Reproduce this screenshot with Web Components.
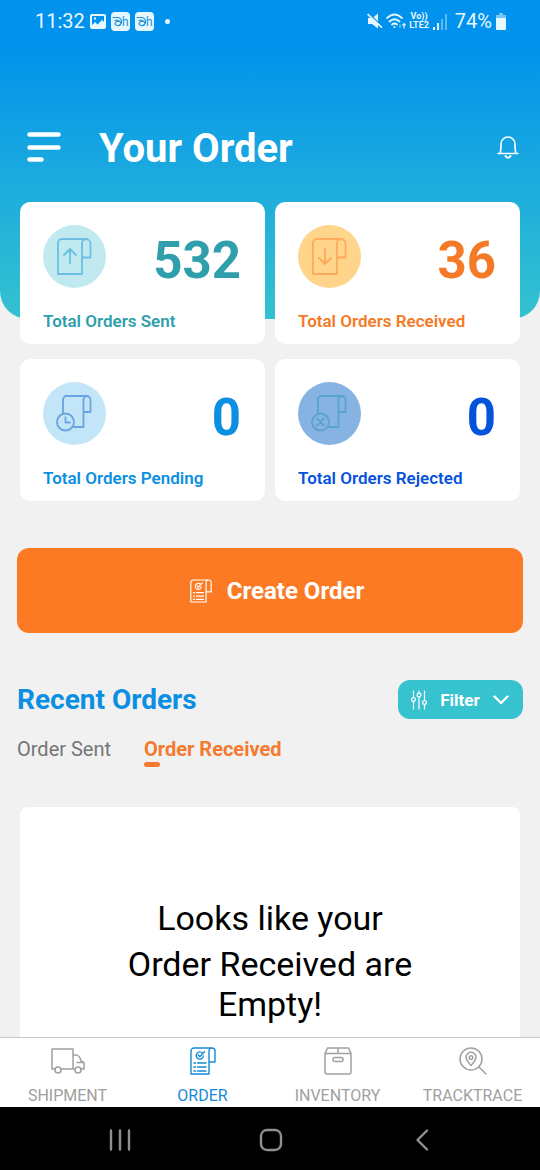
<!DOCTYPE html>
<html lang="en">
<head>
<meta charset="utf-8">
<meta name="viewport" content="width=device-width, initial-scale=1">
<title>Your Order</title>
<style>
  html, body { margin: 0; height: 100%; }
  body { font-family: Roboto, "Liberation Sans", sans-serif; background: #f1f1f1; }
</style>
</head>
<body>
<order-app></order-app>

<script>
const define = (name, html, setup) => {
  const template = document.createElement('template');
  template.innerHTML = html;
  customElements.define(name, class extends HTMLElement {
    constructor() {
      super();
      this.attachShadow({ mode: 'open' }).append(template.content.cloneNode(true));
    }
    connectedCallback() { if (setup) setup(this, this.shadowRoot); }
  });
};

/* ---------- icons ---------- */
const checklist = `<path d="M1 27V4a3 3 0 0 1 3-3h18a3 3 0 0 1 3 3v11h-6M1 27h18V4a3 3 0 0 1 3-3"/>
  <path d="M12.600 6.200A3.600 3.600 0 1 0 13.400 9M8.200 8l1.600 1.700L14.600 4.500"/>
  <path d="M4 16h1.500M7.500 16H16M4 20h1.500M7.500 20H16M4 24h1.500M7.500 24H16"/>`;
const receipt = '<path d="M15 49V18a4 4 0 0 1 4-4h24a4.500 4.500 0 0 1 4.500 4.500V32.500H39M15 49H39V18.500a4.300 4.300 0 0 1 4-4.500"/>';
const scroll = '<path d="M20 31V17.500a3.500 3.500 0 0 1 3.500-3.500h20a4 4 0 0 1 4 4v12h-7M31 45h9.500V18a3.800 3.800 0 0 1 3.500-4"/><circle cx="22.500" cy="40" r="8.500"/>';
const ICONS = {
  sent: [63, 63, 1.8, receipt + '<path d="M27 38.500V24M21 30l6-6 6 6"/>'],
  received: [63, 63, 1.8, receipt + '<path d="M27 24v14.500M21 33l6 6 6-6"/>'],
  pending: [63, 63, 1.8, scroll + '<path d="M22.500 35.500V40.500h4.500"/>'],
  rejected: [63, 63, 1.8, scroll + '<path d="M19 36.500l7 7M26 36.500l-7 7"/>'],
  order: [26, 28, 1.4, checklist],
  shipment: [34, 26, 1.5, '<path d="M4 21H1V1h21v20H10M22 7h3q3.500 0 5 6l3 1.500V21h-2.500M24 21h-2M33 14.500H26"/><circle cx="7" cy="22" r="3"/><circle cx="27" cy="22" r="3"/>'],
  inventory: [28, 28, 1.5, '<path d="M1 6.500 3.500 1h21L27 6.500V25a2 2 0 0 1-2 2H3a2 2 0 0 1-2-2zM1 6.500h26M14 1v5.500"/><rect x="9" y="10.500" width="10" height="4" rx="2"/>'],
  track: [28, 28, 1.5, '<circle cx="12" cy="12" r="11"/><path d="M19.800 19.800 27 27M12 18.500c-3.500-4-5-6-5-8.300a5 5 0 0 1 10 0c0 2.300-1.500 4.300-5 8.300z"/><circle cx="12" cy="10.500" r="1.800"/>'],
  menu: [34, 30, 4.5, '<path d="M2.500 2.500h29M2.500 15.500h29M2.500 27.500h12"/>'],
  bell: [22, 24, 1.6, '<path d="M1 18.500h20M3 18.500C4 16 4 14 4 9a7 7 0 0 1 14 0c0 5 0 7 1 9.500"/><path d="M8.500 21q2.500 3.500 5 0" stroke-width="2"/>'],
  sliders: [16, 20, 1.2, '<path d="M2.500 1v6.500M2.500 11.500V19M8 1v2M8 7v12M13.500 1v9.500M13.500 14.500V19"/><circle cx="2.500" cy="9.500" r="1.900"/><circle cx="8" cy="5" r="1.900"/><circle cx="13.500" cy="12.500" r="1.900"/>'],
  chevron: [16, 10, 2.4, '<path d="M1.500 1.500 8 8l6.500-6.500"/>'],
  recents: [22, 22, 2.4, '<path d="M2 1.500v19M11 1.500v19M20 1.500v19"/>'],
  home: [24, 24, 2.4, '<rect x="2" y="2" width="20" height="20" rx="6"/>'],
  back: [14, 22, 2.4, '<path d="M12 1.500 2.500 11l9.500 9.500"/>'],
  picture: [16, 15, 0, '<path fill="currentColor" fill-rule="evenodd" d="M2 0h12a2 2 0 0 1 2 2v11a2 2 0 0 1-2 2H2a2 2 0 0 1-2-2V2a2 2 0 0 1 2-2zM2 2v9l3-3 2.500 2.500L12 6l2 2V2zM4 3.500h2v2H4z"/>'],
  mute: [16, 16, 0, '<path fill="currentColor" d="M1 5h3l7 7v3.500L5 11H1zM6.500 4 11 .500V8.500zM1.200.500 15.500 14l-1.200 1.300L0 1.700z"/>'],
  wifi: [20, 17, 1.8, '<path d="M1 5Q8.500 -2 16 5M3.500 8.500Q8.500 4 13.500 8.500M6 11.500Q8.500 9.500 11 11.500"/><circle cx="8.500" cy="14" r="1" fill="currentColor" stroke="none"/><path d="M14 12v2" opacity=".4"/><path d="M18 15v-4.500M16.800 12l1.200-1.500 1.200 1.500" stroke-width="1.200"/>'],
  signal: [16, 17, 0, '<g fill="currentColor"><path d="M1 14h2v3H1zM5 10h2v7H5z"/><path opacity=".4" d="M9 6h2v11H9zM13 1h2v16h-2z"/></g>'],
  battery: [12, 17, 0, '<path fill="currentColor" opacity=".5" d="M4 0h4v2h3v4H1V2h3z"/><rect fill="currentColor" x="1" y="5" width="10" height="12" rx="1"/>'],
  badge: [19, 19, 1.2, '<rect width="19" height="19" rx="4" fill="currentColor" stroke="none"/><g stroke="#1f93dd"><path d="M2 5.500h5q4 1 3.500 5-1 3.500-4.500 3-3.500-1-1-3.500 3-2 4.500.500M4 8.500q3-1 5 1"/></g><text x="11" y="14" font-size="12" fill="#1f93dd" stroke="none">h</text>'],
};

define('app-icon', `
<style>
  :host { display: inline-flex; flex: none; }
  span { display: flex; }
  svg { display: block; fill: none; stroke: currentColor; stroke-linecap: round; stroke-linejoin: round; }
  text { font-family: Roboto, sans-serif; }
</style><span></span>`, (host, root) => {
  const [w, h, stroke, body] = ICONS[host.getAttribute('name')];
  const width = Number(host.getAttribute('width')) || w;
  root.querySelector('span').innerHTML =
    `<svg aria-hidden="true" width="${width}" height="${Math.round(width * h / w)}" viewBox="0 0 ${w} ${h}" stroke-width="${stroke}">${body}</svg>`;
});

/* ---------- phone status bar ---------- */
define('status-bar', `
<style>
  :host { display: flex; justify-content: space-between; align-items: center; height: 42px; padding: 0 33px 0 35px; color: #e6f8ff; font-size: 20px; }
  div { display: flex; align-items: center; }
  .left { gap: 5px; }
  .right { gap: 3px; }
  .dot { width: 5px; height: 5px; margin-left: 6px; border-radius: 50%; background: currentColor; }
  .net { display: flex; flex-direction: column; align-items: center; font-size: 9px; line-height: 9px; font-weight: 700; }
  .pct { margin-left: 4px; }
</style>
<div class="left"><span>11:32</span><app-icon name="picture"></app-icon><app-icon name="badge"></app-icon><app-icon name="badge"></app-icon><i class="dot"></i></div>
<div class="right"><app-icon name="mute"></app-icon><app-icon name="wifi"></app-icon><span class="net"><span>Vo))</span><span>LTE2</span></span><app-icon name="signal"></app-icon><span class="pct">74%</span><app-icon name="battery"></app-icon></div>`);

/* ---------- page header ---------- */
define('page-header', `
<style>
  :host { display: block; padding-bottom: 147px; border-radius: 0 0 28px 28px; background: linear-gradient(#0092ec 14%, #1dabde 57%, #34c2cf); color: #fff; }
  .row { display: flex; align-items: center; padding: 82px 21px 0 27px; height: 48px; }
  h1 { flex: 1; margin: 0 0 0 38px; padding-top: 2px; font-size: 40px; line-height: 48px; font-weight: 700; }
  button { display: flex; padding: 0 0 2px; border: 0; background: none; color: inherit; }
</style>
<status-bar></status-bar>
<div class="row">
  <button aria-label="Menu"><app-icon name="menu"></app-icon></button>
  <h1><slot></slot></h1>
  <button aria-label="Notifications"><app-icon name="bell"></app-icon></button>
</div>`);

/* ---------- order totals ---------- */
define('stat-card', `
<style>
  :host { display: flex; flex-direction: column; gap: 21px; padding: 23px 24px 11px 23px; border-radius: 10px; background: #fff; color: var(--ink); }
  .top { display: flex; justify-content: space-between; align-items: center; }
  .disc { display: flex; border-radius: 50%; background: var(--disc); color: var(--line); }
  .value { padding-top: 8px; font-size: 51px; line-height: 55px; font-weight: 700; }
  .label { font-size: 17px; line-height: 24px; font-weight: 600; }
</style>
<div class="top"><span class="disc"></span><span class="value"><slot name="value"></slot></span></div>
<div class="label"><slot></slot></div>`, (host, root) => {
  root.querySelector('.disc').innerHTML = `<app-icon name="${host.getAttribute('icon')}"></app-icon>`;
});

define('order-totals', `
<style>
  :host { display: grid; grid-template-columns: 1fr 1fr; gap: 15px 10px; margin-top: -117px; padding: 0 20px; }
  .sent { --ink: #2f9fab; --disc: #c1eaf0; --line: #6cbfe2; }
  .received { --ink: #f47a27; --disc: #ffd48b; --line: #fbab5b; }
  .pending { --ink: #0b8fe2; --disc: #c2e6f7; --line: #6aa2e2; }
  .rejected { --ink: #0553dc; --disc: #86b3e1; --line: #5aa3cd; }
</style>
<stat-card class="sent" icon="sent"><span slot="value">532</span>Total Orders Sent</stat-card>
<stat-card class="received" icon="received"><span slot="value">36</span>Total Orders Received</stat-card>
<stat-card class="pending" icon="pending"><span slot="value">0</span>Total Orders Pending</stat-card>
<stat-card class="rejected" icon="rejected"><span slot="value">0</span>Total Orders Rejected</stat-card>`);

/* ---------- create button ---------- */
define('create-button', `
<style>
  :host { display: block; margin: 47px 17px; }
  button { display: flex; align-items: center; justify-content: center; gap: 15px; width: 100%; height: 85px; padding: 0 0 0 14px; border: 0; border-radius: 12px; background: #fb7a23; color: #fff; font: 700 24px/32px Roboto, sans-serif; }
</style>
<button><app-icon name="order" width="22"></app-icon><span><slot></slot></span></button>`);

/* ---------- recent orders ---------- */
define('recent-orders', `
<style>
  :host { display: block; padding: 0 17px; }
  header { display: flex; align-items: center; justify-content: space-between; }
  h2 { margin: 0; color: #0b8fe2; font-size: 28px; line-height: 39px; font-weight: 700; }
  button { padding: 0; border: 0; background: none; font: 400 20px/24px Roboto, sans-serif; color: #757575; }
  .filter { display: flex; align-items: center; justify-content: space-between; width: 125px; height: 39px; padding: 0 14px 0 13px; border-radius: 12px; background: #36c2cf; color: #fff; font-size: 17px; font-weight: 700; }
  .tabs { display: flex; align-items: flex-start; gap: 33px; margin-top: 18px; }
  .on { display: flex; flex-direction: column; color: #f47a30; font-weight: 700; }
  .on::after { content: ""; width: 16px; height: 5px; margin-top: 1px; border-radius: 3px; background: currentColor; }
  .panel { margin: 40px 3px 0; padding: 91px 20px; border-radius: 8px; background: #fff; color: #000; text-align: center; font-size: 34px; line-height: 40px; }
  p { margin: 0 auto; max-width: 300px; }
  p + p { margin-top: 6px; }
</style>
<header>
  <h2>Recent Orders</h2>
  <button class="filter"><app-icon name="sliders"></app-icon><span>Filter</span><app-icon name="chevron"></app-icon></button>
</header>
<div class="tabs" role="tablist">
  <button role="tab" aria-selected="false">Order Sent</button>
  <button class="on" role="tab" aria-selected="true">Order Received</button>
</div>
<div class="panel" role="tabpanel"><p>Looks like your</p><p>Order Received are Empty!</p></div>`);

/* ---------- bottom navigation ---------- */
define('tab-bar', `
<style>
  :host { display: block; border-top: 1px solid #c9c9c9; background: #fff; }
  nav { display: grid; grid-template-columns: repeat(4, 1fr); }
  a { display: flex; flex-direction: column; align-items: center; height: 69px; color: #a0a0a0; text-decoration: none; font-size: 16px; line-height: 24px; }
  a > app-icon { height: 46px; align-items: center; }
  a[aria-current] { color: #168ad8; }
</style>
<nav aria-label="Main">
  <a href="#shipment"><app-icon name="shipment"></app-icon>SHIPMENT</a>
  <a href="#order" aria-current="page"><app-icon name="order"></app-icon>ORDER</a>
  <a href="#inventory"><app-icon name="inventory"></app-icon>INVENTORY</a>
  <a href="#tracktrace"><app-icon name="track"></app-icon>TRACKTRACE</a>
</nav>`);

define('system-bar', `
<style>
  :host { display: grid; grid-template-columns: repeat(3, 1fr); height: 63px; padding: 2px 42px 0 44px; box-sizing: border-box; background: #000; color: #8f8f8f; }
  button { display: flex; align-items: center; justify-content: center; padding: 0; border: 0; background: none; color: inherit; }
</style>
<button aria-label="Recent apps"><app-icon name="recents"></app-icon></button>
<button aria-label="Home"><app-icon name="home"></app-icon></button>
<button aria-label="Back"><app-icon name="back"></app-icon></button>`);

define('order-app', `
<style>
  :host { display: grid; grid-template-rows: minmax(0, 1fr) auto auto; height: 100vh; }
  main { overflow-y: auto; scrollbar-width: none; }
</style>
<main>
  <page-header>Your Order</page-header>
  <order-totals></order-totals>
  <create-button>Create Order</create-button>
  <recent-orders></recent-orders>
</main>
<tab-bar></tab-bar>
<system-bar></system-bar>`);
</script>
</body>
</html>
